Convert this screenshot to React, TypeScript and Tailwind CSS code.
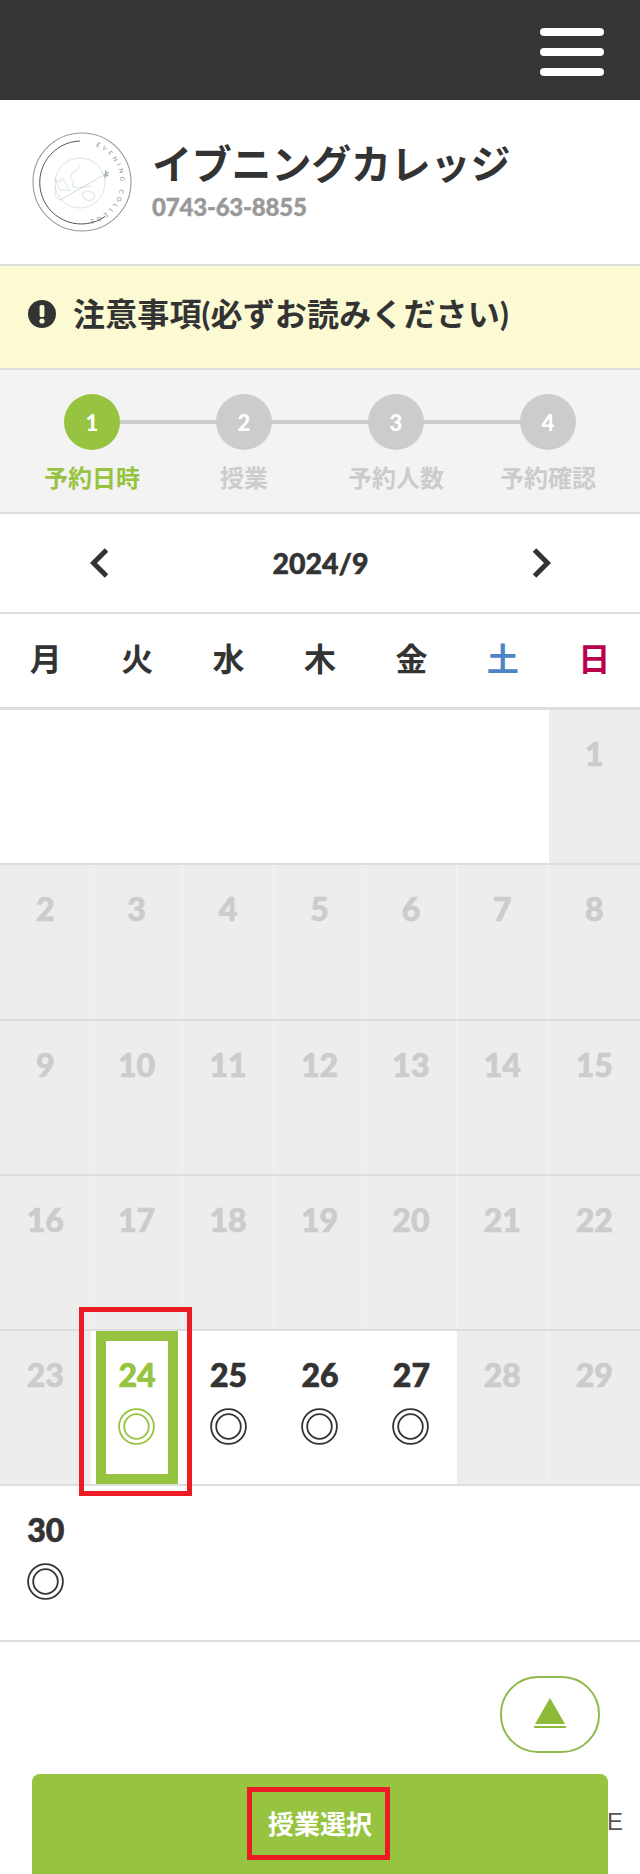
const JP = "font-['Lato','Noto_Sans_CJK_JP',sans-serif]";
const HEAVY = "font-black [-webkit-text-stroke:0.7px]";

function Logo() {
  return (
    <svg viewBox="0 0 100 100" className="w-[100px] h-[100px] shrink-0" fill="none">
      <defs>
        <path id="logo-ring" d="M50 11.5 A38.5 38.5 0 1 1 50 88.5 A38.5 38.5 0 1 1 50 11.5" />
      </defs>
      <circle cx="50" cy="50" r="49" stroke="#9a9a9a" strokeWidth="1.1" />
      <path d="M48 9 A41.5 41.5 0 1 0 73 84.5" stroke="#555" strokeWidth="1" />
      <text fontSize="6" fill="#8a8a8a" letterSpacing="3.2" fontFamily="Lato, sans-serif">
        <textPath href="#logo-ring" startOffset="14">EVENING COLLEGE</textPath>
      </text>
      <g stroke="#b9d0cd" strokeWidth="0.55">
        <circle cx="48" cy="51" r="25" />
        <path d="M48 32 L45 38 L40 41 L38 46 L42 49 L40 54 L45 56 L53 55 L60 54" />
        <path d="M23 46 L27 51 L30 46 L35 54 L38 59 L33 58 L28 58 L25 52 Z" />
        <path d="M50 61 L55 59 L62 61 L63 66 L58 69 L52 67 Z" />
        <path d="M28 68 L70 44" stroke="#aebfbc" />
        <path d="M28 68 C22 66 22 60 24 54" />
      </g>
      <path d="M71 44 l2 -3 0 -3 1.5 0 0 2.5 3 -1 -2 3 2 2 -3 -.5 -1 2.5 -1 -2z" fill="#a9b8b6" />
    </svg>
  );
}

function Rings({ color }: { color: string }) {
  return (
    <svg viewBox="0 0 37 37" className="w-[37px] h-[37px] -ml-px" fill="none" stroke={color} strokeWidth="1.8">
      <circle cx="18.5" cy="18.5" r="17.4" />
      <circle cx="18.5" cy="18.5" r="12.3" />
    </svg>
  );
}

function Step({ n, label, active }: { n: number; label: string; active?: boolean }) {
  return (
    <div className="flex flex-col items-center w-[152px] z-10">
      <div
        className={`w-14 h-14 rounded-full flex items-center justify-center text-white text-[22px] font-black ${
          active ? "bg-[#96c440]" : "bg-[#cccccc]"
        }`}
      >
        {n}
      </div>
      <div className={`mt-[12px] text-2xl leading-[32px] font-bold ${active ? "text-[#96c440]" : "text-[#cccccc]"}`}>
        {label}
      </div>
    </div>
  );
}

type Cell = { d?: number; kind: "blank" | "off" | "open" | "sel" };

const off = (a: number, b: number): Cell[] =>
  Array.from({ length: b - a + 1 }, (_, i) => ({ d: a + i, kind: "off" as const }));

const rows: Cell[][] = [
  [...Array.from({ length: 6 }, () => ({ kind: "blank" as const })), { d: 1, kind: "off" }],
  off(2, 8),
  off(9, 15),
  off(16, 22),
  [
    { d: 23, kind: "off" },
    { d: 24, kind: "sel" },
    { d: 25, kind: "open" },
    { d: 26, kind: "open" },
    { d: 27, kind: "open" },
    { d: 28, kind: "off" },
    { d: 29, kind: "off" },
  ],
  [{ d: 30, kind: "open" }, ...Array.from({ length: 6 }, () => ({ kind: "blank" as const }))],
];

function DayCell({ c, last }: { c: Cell; last: boolean }) {
  if (c.kind === "blank") return <div className="bg-white" />;
  if (c.kind === "off")
    return (
      <div className={`bg-[#ededed] flex justify-center ${last ? "" : "border-r border-[#f3f3f3]"}`}>
        <span className={`mt-[24px] text-[32px] leading-10 text-[#cccccc] ${HEAVY}`}>{c.d}</span>
      </div>
    );
  const sel = c.kind === "sel";
  return (
    <div className="bg-white">
      <div
        className={`h-full flex flex-col items-center ${
          sel ? "mx-[4.5px] border-[10px] border-[#96c440] text-[#96c440]" : "text-[#333333]"
        }`}
      >
        <span className={`${sel ? "mt-[14px]" : "mt-[24px]"} text-[32px] leading-10 ${HEAVY}`}>{c.d}</span>
        <span className="mt-[13px]">
          <Rings color={sel ? "#96c440" : "#333333"} />
        </span>
      </div>
    </div>
  );
}

export default function App() {
  const week = ["月", "火", "水", "木", "金", "土", "日"];
  return (
    <div className={`relative w-[640px] h-[1874px] overflow-hidden bg-white text-[#333333] ${JP}`}>
      <header className="h-[100px] bg-[#363636] flex flex-col items-end justify-center gap-3 pr-9 pt-1">
        <span className="block w-16 h-2 rounded bg-white" />
        <span className="block w-16 h-2 rounded bg-white" />
        <span className="block w-16 h-2 rounded bg-white" />
      </header>

      <section className="h-[166px] border-b-2 border-[#dddddd] flex items-center pl-[32px] pb-[1px]">
        <Logo />
        <div className="ml-[20px] -mt-[2px]">
          <div className="text-[40px] leading-[48px] font-bold tracking-[-0.2px] whitespace-nowrap">イブニングカレッジ</div>
          <div className="text-[24px] leading-[30px] font-black text-[#999999] mt-[4px] tracking-[-0.2px] [-webkit-text-stroke:0.4px]">
            0743-63-8855
          </div>
        </div>
      </section>

      <section className="h-[104px] bg-[#fbfad3] border-b-2 border-[#dddddd] flex items-center pl-[28px] pb-[6px]">
        <svg viewBox="0 0 28 28" className="w-7 h-7 shrink-0">
          <circle cx="14" cy="14" r="14" fill="#333333" />
          <rect x="11.6" y="5" width="4.8" height="12" rx="1.6" fill="#fbfad3" />
          <circle cx="14" cy="21" r="2.6" fill="#fbfad3" />
        </svg>
        <div className="ml-[17px] text-[32px] leading-10 font-bold whitespace-nowrap tracking-[0.15px]">注意事項(必ずお読みください)</div>
      </section>

      <section className="relative h-[144px] bg-[#f3f3f3] border-b-2 border-[#dddddd] flex px-4 pt-6">
        <div className="absolute left-[116px] top-[50px] w-[432px] h-1 bg-[#cccccc]" />
        <Step n={1} label="予約日時" active />
        <Step n={2} label="授業" />
        <Step n={3} label="予約人数" />
        <Step n={4} label="予約確認" />
      </section>

      <section className="h-[100px] border-b-2 border-[#dddddd] flex items-center justify-between pl-[90px] pr-[89px]">
        <svg viewBox="0 0 18 30" className="w-[18px] h-[30px]" fill="none" stroke="#333333" strokeWidth="5">
          <path d="M16.5 2 L3.5 15 L16.5 28" />
        </svg>
        <div className="text-[28.5px] leading-10 font-black [-webkit-text-stroke:0.5px]">2024/9</div>
        <svg viewBox="0 0 18 30" className="w-[18px] h-[30px]" fill="none" stroke="#333333" strokeWidth="5">
          <path d="M1.5 2 L14.5 15 L1.5 28" />
        </svg>
      </section>

      <section className="h-[96px] border-b-[3px] border-[#dddddd] grid grid-cols-7 items-center pb-[4px]">
        {week.map((w, i) => (
          <div
            key={w}
            className={`text-center text-[32px] leading-10 font-bold ${
              i === 5 ? "text-[#4d84c4]" : i === 6 ? "text-[#b8004f]" : "text-[#333333]"
            }`}
          >
            {w}
          </div>
        ))}
      </section>

      {rows.map((row, r) => (
        <section key={r} className="h-[155.3px] border-b-2 border-[#dddddd] grid grid-cols-7">
          {row.map((c, i) => (
            <DayCell key={i} c={c} last={i === 6} />
          ))}
        </section>
      ))}

      <div className="flex justify-end pt-[34px] pr-10">
        <button className="w-[100px] h-[77px] rounded-[38px] border-2 border-[#8fba4b] flex items-center justify-center">
          <svg viewBox="0 0 32 32" className="w-8 h-8">
            <path d="M16 0 L31 26 L1 26 Z" fill="#8dbb38" />
            <rect x="0" y="28" width="32" height="2" fill="#8dbb38" />
          </svg>
        </button>
      </div>

      <button className="relative z-10 block ml-8 mt-[21px] w-[576px] h-[110px] rounded-t-lg bg-[#96c440] text-center">
        <span className="block mt-[-10px] text-[26px] leading-9 font-bold text-white">授業選択</span>
      </button>

      <span className="absolute left-[607px] top-[1808px] text-[24px] leading-7 text-[#555555] font-['Liberation_Sans',sans-serif]">
        E
      </span>

      <div className="absolute left-[79px] top-[1307px] w-[113px] h-[189px] border-[5px] border-[#ed1c24] z-20" />
      <div className="absolute left-[247px] top-[1787px] w-[143px] h-[73px] border-[5px] border-[#ed1c24] z-20" />
    </div>
  );
}
